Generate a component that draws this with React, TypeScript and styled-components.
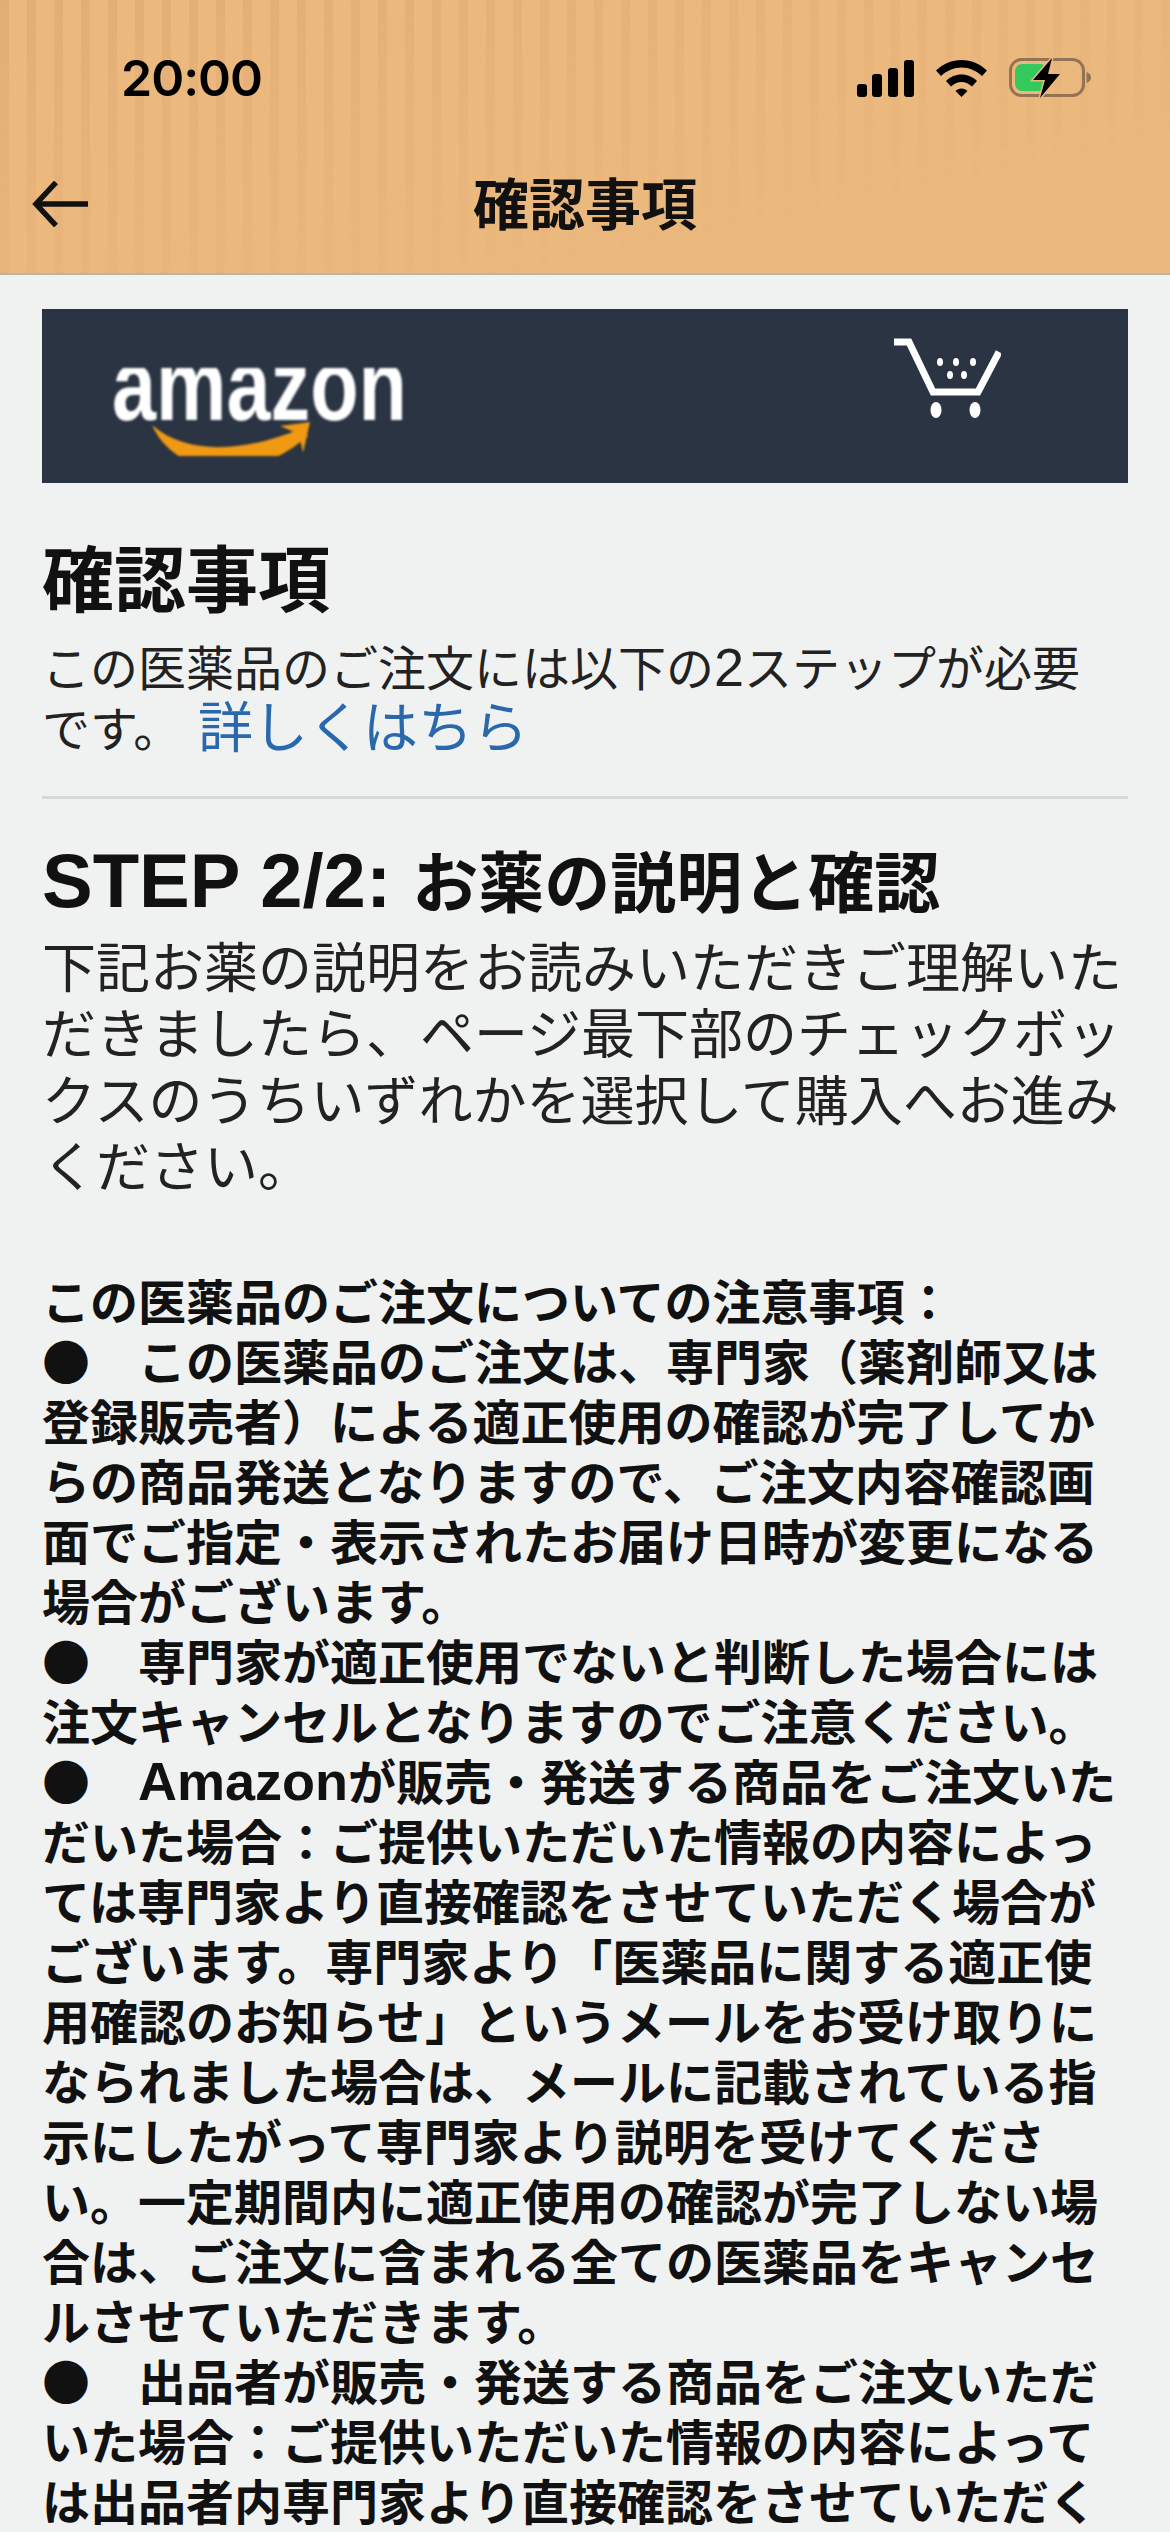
import React from "react";
import styled, { createGlobalStyle } from "styled-components";

const Global = createGlobalStyle`
  html, body { margin: 0; padding: 0; background: #f0f2f2; }
  body { font-family: "Noto Sans CJK JP", "Noto Sans", sans-serif; color: #111; }
  #root { height: 2532px; overflow: hidden; }
`;

const Header = styled.header`
  position: relative;
  height: 273px;
  background: #ebb87e;
  border-bottom: 2px solid #b9b3a8;
  overflow: hidden;
  &::before {
    content: "";
    position: absolute;
    inset: 0;
    background: repeating-linear-gradient(90deg, rgba(205,150,100,.28) 0 9px, transparent 9px 27px);
    -webkit-mask-image: linear-gradient(168deg, #000 0%, rgba(0,0,0,.5) 35%, transparent 75%);
    mask-image: linear-gradient(168deg, #000 0%, rgba(0,0,0,.5) 35%, transparent 75%);
  }
`;

const StatusRow = styled.div`
  position: relative;
  display: flex;
  align-items: center;
  justify-content: space-between;
  height: 44px;
  padding: 56px 79px 0 121px;
`;

const Clock = styled.span`
  font-family: Inter, "Liberation Sans", sans-serif;
  font-size: 50px;
  font-weight: 600;
  line-height: 44px;
  color: #000;
  letter-spacing: -1px;
`;

const StatusIcons = styled.div`
  display: flex;
  align-items: center;
  gap: 22px;
`;

const NavRow = styled.div`
  position: relative;
  display: grid;
  grid-template-columns: 118px 1fr 118px;
  align-items: center;
  height: 70px;
  margin-top: 69px;
  padding-left: 32px;
`;

const NavTitle = styled.h1`
  margin: -7px 0 0;
  font-size: 56px;
  font-weight: 700;
  line-height: 70px;
  text-align: center;
  color: #111;
  transform: translateX(-16px);
`;

const Content = styled.main`
  padding: 34px 42px 0;
`;

const Banner = styled.div`
  display: flex;
  justify-content: space-between;
  align-items: flex-start;
  height: 174px;
  padding: 0 127px 0 70px;
  background: #2a3442;
`;

const LogoArt = styled.svg`
  margin-top: 59px;
  filter: blur(0.8px);
`;

const CartArt = styled.svg`
  margin-top: 29px;
  filter: blur(0.7px);
`;

const Title = styled.h2`
  margin: 47px 0 0;
  font-size: 72px;
  font-weight: 700;
  line-height: 90px;
`;

const Intro = styled.p`
  margin: 15px 0 0;
  max-width: 1074px;
  font-size: 48px;
  font-weight: 400;
  line-height: 61px;
  color: #222;
`;

const Latin = styled.span<{ $size: number }>`
  font-family: "Liberation Sans", sans-serif;
  font-size: ${(p) => p.$size}px;
  line-height: 0;
`;

const Link = styled.a`
  margin-left: 6px;
  font-size: 55px;
  line-height: 0;
  color: #2a68ad;
  text-decoration: none;
`;

const Divider = styled.hr`
  margin: 39px 0 0;
  border: 0;
  border-top: 3px solid #d6d8d8;
`;

const StepTitle = styled.h3`
  margin: 37px 0 0;
  font-size: 66px;
  font-weight: 700;
  line-height: 84px;
`;

const StepText = styled.p`
  margin: 12px 0 0;
  font-size: 54px;
  font-weight: 400;
  line-height: 66.3px;
  color: #222;
`;

const Notes = styled.div`
  margin-top: 72px;
  font-size: 48px;
  font-weight: 700;
  line-height: 60px;
  color: #111;
`;

export default function App() {
  return (
    <>
      <Global />
      <Header>
        <StatusRow>
          <Clock>20:00</Clock>
          <StatusIcons>
            <svg width="57" height="37" viewBox="0 0 57 37" fill="#000">
              <rect x="0" y="24" width="10" height="13" rx="3" />
              <rect x="15" y="14" width="10" height="23" rx="3" />
              <rect x="31" y="8" width="10" height="29" rx="3" />
              <rect x="47" y="0" width="10" height="37" rx="3" />
            </svg>
            <svg width="51" height="37" viewBox="0 0 51 37" fill="#000">
              <path d="M0 10.5C7 4 16 0 25.5 0C35 0 44 4 51 10.5L46 16C40 10.5 33 7.5 25.5 7.5C18 7.5 11 10.5 5 16Z" />
              <path d="M10 21C14 17 19.5 14.5 25.5 14.5C31.5 14.5 37 17 41 21L36 26.5C33 24 29.5 22 25.5 22C21.5 22 18 24 15 26.5Z" />
              <path d="M19.5 31C21 29.5 23 28.5 25.5 28.5C28 28.5 30 29.5 31.5 31L25.5 37Z" />
            </svg>
            <svg width="82" height="42" viewBox="0 0 82 42">
              <rect x="1.5" y="2.5" width="73" height="36" rx="11" fill="none" stroke="#927454" strokeWidth="3" />
              <path d="M77.5 15C80.5 16 82 18 82 20.5C82 23 80.5 25 77.5 26Z" fill="#927454" />
              <rect x="6" y="7" width="32" height="27" rx="7" fill="#34c95c" />
              <path d="M43 1L24 23H36L31 41L51 17H39Z" fill="#000" stroke="#ebb87e" strokeWidth="3" strokeLinejoin="miter" paintOrder="stroke" />
            </svg>
          </StatusIcons>
        </StatusRow>
        <NavRow>
          <svg width="56" height="46" viewBox="0 0 56 46" fill="none" stroke="#111" strokeWidth="5.5">
            <path d="M56 23H4" />
            <path d="M24 1.5L4 23L24 44.5" />
          </svg>
          <NavTitle>確認事項</NavTitle>
          <span />
        </NavRow>
      </Header>
      <Content>
        <Banner>
          <LogoArt width="295" height="88" viewBox="0 0 295 88">
            <text x="0" y="52" fontFamily="Liberation Sans" fontWeight="700" fontSize="102" fill="#fff" textLength="295" lengthAdjust="spacingAndGlyphs">amazon</text>
            <path d="M40 57C75 88 135 84 190 60L196 68C170 90 150 96 130 100H90C70 92 50 80 40 57Z" fill="#f09a14" />
            <path d="M168 58L198 54L191 85L187 66Z" fill="#f09a14" />
          </LogoArt>
          <CartArt width="107" height="80" viewBox="0 0 107 80">
            <path d="M0 4H15L39 54H84L105 14" fill="none" stroke="#fff" strokeWidth="7" />
            <ellipse cx="42" cy="72" rx="5.5" ry="8" fill="#fff" />
            <ellipse cx="81" cy="72" rx="5.5" ry="8" fill="#fff" />
            {[[46, 24], [62, 24], [79, 24], [56, 37], [70, 37]].map(([cx, cy]) => (
              <ellipse key={`${cx}-${cy}`} cx={cx} cy={cy} rx="3" ry="4" fill="#fff" />
            ))}
          </CartArt>
        </Banner>
        <Title>確認事項</Title>
        <Intro>
          この医薬品のご注文には以下の<Latin $size={54}>2</Latin>ステップが必要です。 <Link>詳しくはちら</Link>
        </Intro>
        <Divider />
        <StepTitle><Latin $size={76}>STEP 2/2: </Latin>お薬の説明と確認</StepTitle>
        <StepText>下記お薬の説明をお読みいただきご理解いただきましたら、ページ最下部のチェックボックスのうちいずれかを選択して購入へお進みください。</StepText>
        <Notes>
          <div>この医薬品のご注文についての注意事項：</div>
          <div>●　この医薬品のご注文は、専門家（薬剤師又は登録販売者）による適正使用の確認が完了してからの商品発送となりますので、ご注文内容確認画面でご指定・表示されたお届け日時が変更になる場合がございます。</div>
          <div>●　専門家が適正使用でないと判断した場合には注文キャンセルとなりますのでご注意ください。</div>
          <div>●　<Latin $size={54}>Amazon</Latin>が販売・発送する商品をご注文いただいた場合：ご提供いただいた情報の内容によっては専門家より直接確認をさせていただく場合がございます。専門家より「医薬品に関する適正使用確認のお知らせ」というメールをお受け取りになられました場合は、メールに記載されている指示にしたがって専門家より説明を受けてください。一定期間内に適正使用の確認が完了しない場合は、ご注文に含まれる全ての医薬品をキャンセルさせていただきます。</div>
          <div>●　出品者が販売・発送する商品をご注文いただいた場合：ご提供いただいた情報の内容によっては出品者内専門家より直接確認をさせていただく場合がございます。</div>
        </Notes>
      </Content>
    </>
  );
}
